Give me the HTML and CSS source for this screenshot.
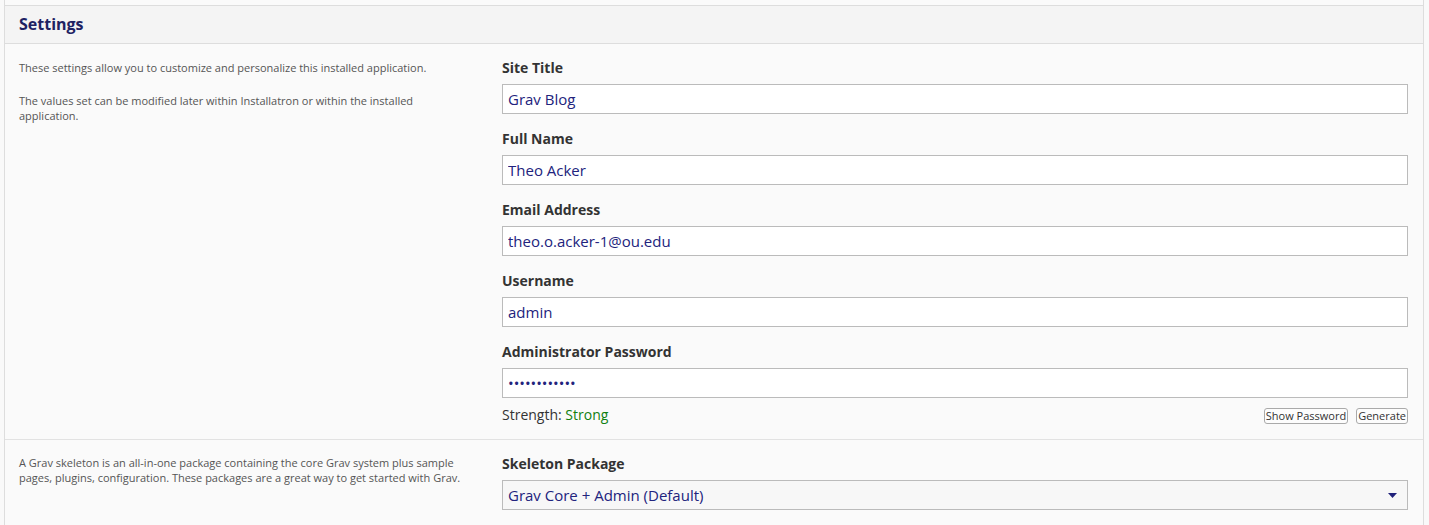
FILE: index.html
```html
<!DOCTYPE html>
<html lang="en">
<head>
<meta charset="utf-8">
<title>Settings</title>
<link rel="stylesheet" href="styles.css">
</head>
<body>
<div class="panel">
  <div class="panel-top"></div>
  <div class="panel-header"><h2 class="panel-title">Settings</h2></div>

  <div class="section">
    <div class="section-help">
      <p>These settings allow you to customize and personalize this installed application.</p>
      <p>The values set can be modified later within Installatron or within the installed application.</p>
    </div>
    <div class="section-fields">
      <div class="field">
        <label class="field-label" for="site-title">Site Title</label>
        <input class="field-input" id="site-title" type="text" value="Grav Blog">
      </div>
      <div class="field">
        <label class="field-label" for="full-name">Full Name</label>
        <input class="field-input" id="full-name" type="text" value="Theo Acker">
      </div>
      <div class="field">
        <label class="field-label" for="email">Email Address</label>
        <input class="field-input" id="email" type="text" value="theo.o.acker-1@ou.edu">
      </div>
      <div class="field">
        <label class="field-label" for="username">Username</label>
        <input class="field-input" id="username" type="text" value="admin">
      </div>
      <div class="field field-last">
        <label class="field-label" for="password">Administrator Password</label>
        <input class="field-input" id="password" type="password" value="abcdefghijkl">
        <div class="strength-row">
          <span class="strength">Strength: <span class="strength-value">Strong</span></span>
          <span class="strength-actions">
            <button class="mini-btn" type="button">Show Password</button>
            <button class="mini-btn" type="button">Generate</button>
          </span>
        </div>
      </div>
    </div>
  </div>

  <div class="section">
    <div class="section-help">
      <p>A Grav skeleton is an all-in-one package containing the core Grav system plus sample pages, plugins, configuration. These packages are a great way to get started with Grav.</p>
    </div>
    <div class="section-fields">
      <div class="field">
        <label class="field-label" for="skeleton">Skeleton Package</label>
        <div class="select-wrap">
          <select class="field-select" id="skeleton">
            <option>Grav Core + Admin (Default)</option>
          </select>
          <svg class="select-arrow" width="9" height="5" viewBox="0 0 9 5"><path d="M0 0h9L4.5 5z" fill="#20217a"/></svg>
        </div>
      </div>
    </div>
  </div>
</div>
</body>
</html>
```

FILE: styles.css
```css
* { box-sizing: border-box; }

html, body {
  margin: 0;
  padding: 0;
  background: #f9f9f9;
  font-family: "Open Sans", "Liberation Sans", sans-serif;
  color: #333;
}

.panel {
  margin: 0 5px 0 4px;
  border-left: 1px solid #dddddd;
  border-right: 1px solid #dddddd;
  background: #fafafa;
}

.panel-top {
  height: 6px;
  border-bottom: 1px solid #dddddd;
}

.panel-header {
  height: 38px;
  background: #f4f4f4;
  border-bottom: 1px solid #dddddd;
  display: flex;
  align-items: center;
  padding: 0 14px 2px;
}

.panel-title {
  margin: 0;
  font-size: 16px;
  font-weight: 700;
  color: #1e2263;
  line-height: 20px;
}

.section {
  display: grid;
  grid-template-columns: 449px 1fr;
  column-gap: 34px;
  padding: 14px 15px 14px 14px;
  border-bottom: 1px solid #e2e2e2;
}

.section:last-child { border-bottom: none; }

.section-help {
  padding-top: 2px;
  font-size: 11px;
  line-height: 15px;
  color: #555;
}

.section + .section .section-help { padding-top: 1px; }

.section-help p { margin: 0 0 18px; }

.section-fields { display: flex; flex-direction: column; }

.field { display: flex; flex-direction: column; margin-bottom: 15px; }
.field-last { margin-bottom: 0; }

.field-label {
  font-size: 14px;
  font-weight: 700;
  line-height: 20px;
  color: #333;
  margin-bottom: 6px;
}

.field-input,
.field-select {
  width: 100%;
  height: 30px;
  border: 1px solid #bbbbbb;
  border-radius: 0;
  background: #fff;
  padding: 0 5px;
  font-family: "Open Sans", "Liberation Sans", sans-serif;
  font-size: 15px;
  color: #22237d;
  outline: none;
  margin: 0;
}

.strength-row {
  display: flex;
  justify-content: space-between;
  align-items: center;
  margin-top: 7px;
  height: 20px;
}

.strength { font-size: 14px; line-height: 20px; color: #333; }
.strength-value { color: #108010; }

.strength-actions { display: flex; gap: 8px; padding-top: 2px; }

.mini-btn {
  height: 16px;
  padding: 0 1px;
  font-family: "Open Sans", "Liberation Sans", sans-serif;
  font-size: 11px;
  line-height: 14px;
  color: #333;
  background: #fdfdfd;
  border: 1px solid #aaaaaa;
  border-radius: 3px;
}

.select-wrap { position: relative; }

.field-select {
  appearance: none;
  -webkit-appearance: none;
  background: #f7f7f7;
}

.select-arrow {
  position: absolute;
  right: 11px;
  top: 13px;
  pointer-events: none;
}
```
